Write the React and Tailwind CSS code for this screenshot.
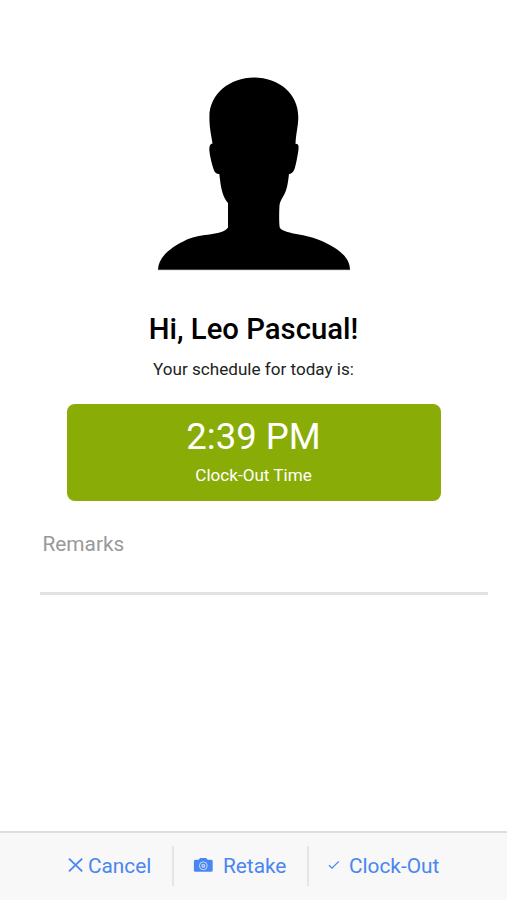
const Silhouette = () => (
  <svg viewBox="0 0 194 194" className="h-[194px] w-[194px]" aria-label="Profile photo">
    <path
      d="M97 0.6
         C122 0.6 141.3 17 141.3 40
         C141.3 49 139 56 138.5 66.8
         C141.5 66.8 142 68.5 141.3 74
         C140 82 138.6 89 137.5 92
         C136.3 95.5 134 96.8 132 97
         C130.8 107 130 112 127.5 117
         C125.5 121 123 124 122.5 128
         C122 136 122 145 122.7 150.5
         C127 157 146 156.5 161 162.5
         C181 170.5 193 180 193 193
         L1 193
         C1 181 12 171 30 162.5
         C45 156 65 159 71 150.5
         L71 126
         C66 120 64 113 62.3 97
         C60 97 57.5 96 56.5 92
         C55 87 53 80 52.4 74
         C52 69 53 67 55.5 66.5
         C54 56 52.4 51 52.4 40
         C52.4 17 73 0.6 97 0.6 Z"
      fill="#000"
    />
    <path d="M1 192.7 H193" stroke="#777" strokeWidth="0.7" />
  </svg>
);

const CloseIcon = () => (
  <svg viewBox="0 0 16 16" className="mb-0.5 h-4 w-4" aria-hidden="true">
    <path d="M1 1.6 L14.2 14.4 M14.2 1.6 L1 14.4" fill="none" stroke="currentColor" strokeWidth="1.9" />
  </svg>
);

const CameraIcon = () => (
  <svg viewBox="0 0 20 16" className="mb-0.5 h-4 w-5" aria-hidden="true">
    <path
      d="M2.4 2.8 H5.4 C6.2 2.8 6.4 1 7.6 1 H12.7 C13.9 1 14.2 2.8 15 2.8 H18.2 Q19.7 2.8 19.7 4.3 V13.3 Q19.7 14.8 18.2 14.8 H2.4 Q0.9 14.8 0.9 13.3 V4.3 Q0.9 2.8 2.4 2.8 Z"
      fill="currentColor"
    />
    <circle cx="10.3" cy="8.8" r="3.9" fill="none" stroke="#d5e3fc" strokeWidth="0.9" />
    <circle cx="10.3" cy="8.8" r="1.9" fill="#d5e3fc" />
    <circle cx="10.3" cy="8.8" r="0.8" fill="currentColor" />
  </svg>
);

const CheckIcon = () => (
  <svg viewBox="0 0 12 10" className="mb-0.5 h-2.5 w-3" aria-hidden="true">
    <path d="M1 5.2 L4 8.2 L10.8 1.4" fill="none" stroke="currentColor" strokeWidth="1.3" />
  </svg>
);

const Divider = () => <span className="h-10 w-[2px] shrink-0 bg-[#e5e5e5]" />;

const App = () => (
  <div className="flex h-[900px] w-[507px] flex-col bg-white font-[Roboto,sans-serif] text-black">
    <main className="flex flex-1 flex-col items-center pt-[77px]">
      <Silhouette />
      <h1 className="mt-10 text-[29.3px] leading-9 font-medium whitespace-nowrap">Hi, Leo Pascual!</h1>
      <p className="mt-[10px] text-[17.1px] leading-6 whitespace-nowrap text-[#222]">Your schedule for today is:</p>

      <section className="mt-[23px] flex h-[96.5px] w-[374px] flex-col items-center rounded-[8px] bg-[#8aac06] pt-[13px] text-white">
        <span className="text-[36.5px] leading-10 whitespace-nowrap">2:39 PM</span>
        <span className="mt-[6px] text-[17.1px] leading-6 whitespace-nowrap">Clock-Out Time</span>
      </section>

      <div className="mt-[29.5px] ml-[21px] h-[65px] w-[448px] border-b-[3px] border-[#e2e2e2] pl-[2.5px]">
        <textarea
          placeholder="Remarks"
          aria-label="Remarks"
          className="block h-14 w-full resize-none text-[20.8px] leading-7 outline-none placeholder:text-[#999]"
        />
      </div>
    </main>

    <footer className="flex h-[69px] items-center border-t-2 border-[#dedede] bg-[#f8f8f8] pb-[2px] text-[20.8px] leading-7 text-[#4a86f0]">
      <button type="button" className="flex w-[172px] items-center gap-1 pl-[68px] whitespace-nowrap">
        <CloseIcon />
        Cancel
      </button>
      <Divider />
      <button type="button" className="flex w-[133px] items-center gap-[10px] pl-[19px] whitespace-nowrap">
        <CameraIcon />
        Retake
      </button>
      <Divider />
      <button type="button" className="flex flex-1 items-center gap-[9px] pl-[19px] whitespace-nowrap">
        <CheckIcon />
        Clock-Out
      </button>
    </footer>
  </div>
);

export default App;
